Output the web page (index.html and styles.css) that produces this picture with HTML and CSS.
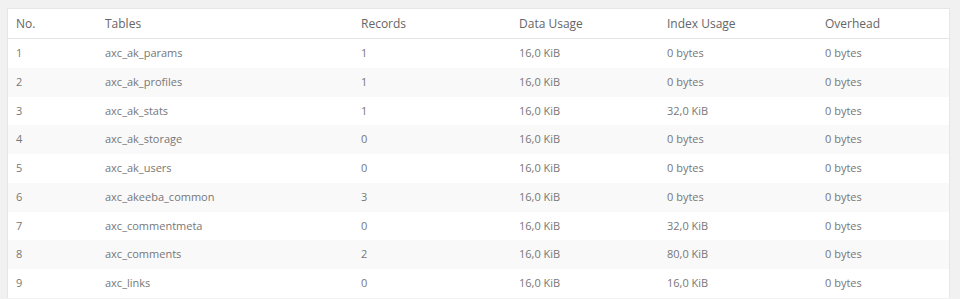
FILE: index.html
```html
<!DOCTYPE html>
<html>
<head>
<meta charset="utf-8">
<link rel="stylesheet" href="styles.css">
</head>
<body>
<div class="panel">
  <table class="db-table">
    <colgroup>
      <col class="c-no"><col class="c-table"><col class="c-rec"><col class="c-data"><col class="c-index"><col class="c-over">
    </colgroup>
    <thead>
      <tr><th>No.</th><th>Tables</th><th>Records</th><th>Data Usage</th><th>Index Usage</th><th>Overhead</th></tr>
    </thead>
    <tbody>
      <tr><td>1</td><td>axc_ak_params</td><td>1</td><td>16,0 KiB</td><td>0 bytes</td><td>0 bytes</td></tr>
      <tr><td>2</td><td>axc_ak_profiles</td><td>1</td><td>16,0 KiB</td><td>0 bytes</td><td>0 bytes</td></tr>
      <tr><td>3</td><td>axc_ak_stats</td><td>1</td><td>16,0 KiB</td><td>32,0 KiB</td><td>0 bytes</td></tr>
      <tr><td>4</td><td>axc_ak_storage</td><td>0</td><td>16,0 KiB</td><td>0 bytes</td><td>0 bytes</td></tr>
      <tr><td>5</td><td>axc_ak_users</td><td>0</td><td>16,0 KiB</td><td>0 bytes</td><td>0 bytes</td></tr>
      <tr><td>6</td><td>axc_akeeba_common</td><td>3</td><td>16,0 KiB</td><td>0 bytes</td><td>0 bytes</td></tr>
      <tr><td>7</td><td>axc_commentmeta</td><td>0</td><td>16,0 KiB</td><td>32,0 KiB</td><td>0 bytes</td></tr>
      <tr><td>8</td><td>axc_comments</td><td>2</td><td>16,0 KiB</td><td>80,0 KiB</td><td>0 bytes</td></tr>
      <tr><td>9</td><td>axc_links</td><td>0</td><td>16,0 KiB</td><td>16,0 KiB</td><td>0 bytes</td></tr>
    </tbody>
  </table>
</div>
</body>
</html>
```
FILE: styles.css
```css
html, body {
  margin: 0;
  padding: 0;
  background: #f1f1f1;
  font-family: "Open Sans", "Liberation Sans", sans-serif;
  height: 100%;
  overflow: hidden;
}
.panel {
  margin: 8px 10px 0 7px;
  background: #fff;
  border: 1px solid #e6e6e6;
  border-bottom: none;
}
.db-table {
  width: 100%;
  border-collapse: collapse;
  table-layout: fixed;
}
.c-no { width: 89px; }
.c-table { width: 256px; }
.c-rec { width: 158px; }
.c-data { width: 148px; }
.c-index { width: 158px; }
.c-over { width: auto; }
.db-table th {
  text-align: left;
  font-weight: normal;
  font-size: 12px;
  color: #666;
  padding: 7px 8px 6px;
  line-height: 16px;
  border-bottom: 1px solid #e5e5e5;
}
.db-table td {
  font-size: 11px;
  color: #777;
  padding: 6px 8px;
  line-height: 16.75px;
  white-space: nowrap;
}
.db-table tbody tr:nth-child(even) td {
  background: #f9f9f9;
}
```
